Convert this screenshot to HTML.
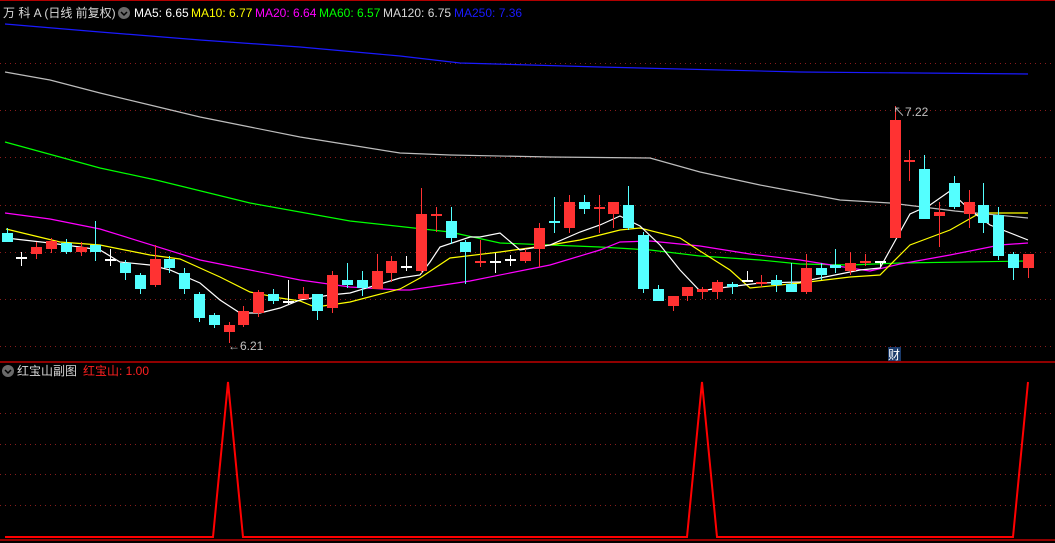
<!DOCTYPE html>
<html><head><meta charset="utf-8"><style>
html,body{margin:0;padding:0;background:#000;width:1055px;height:543px;overflow:hidden}
svg{display:block}
text{font-family:"Liberation Sans","Noto Sans CJK SC",sans-serif;font-size:12px}
</style></head><body>
<svg id="s" width="1055" height="543" xmlns="http://www.w3.org/2000/svg">
<rect width="1055" height="543" fill="#000"/>
<line x1="0" y1="0.5" x2="1055" y2="0.5" stroke="#b00000"/>
<g stroke="#8a1c1c" stroke-dasharray="1,4" stroke-width="1">
<line x1="0" y1="63.5" x2="1055" y2="63.5"/><line x1="0" y1="110.5" x2="1055" y2="110.5"/>
<line x1="0" y1="157.5" x2="1055" y2="157.5"/><line x1="0" y1="205.5" x2="1055" y2="205.5"/>
<line x1="0" y1="252.5" x2="1055" y2="252.5"/><line x1="0" y1="299.5" x2="1055" y2="299.5"/>
<line x1="0" y1="346.5" x2="1055" y2="346.5"/>
<line x1="0" y1="413.5" x2="1055" y2="413.5"/><line x1="0" y1="444.5" x2="1055" y2="444.5"/>
<line x1="0" y1="474.5" x2="1055" y2="474.5"/><line x1="0" y1="505.5" x2="1055" y2="505.5"/>
</g>
<line x1="0" y1="362" x2="1055" y2="362" stroke="#c00000" stroke-width="1.5"/>
<line x1="0" y1="540" x2="1055" y2="540" stroke="#c00000" stroke-width="1.5"/>
<g fill="none" stroke-width="1.2">
<polyline stroke="#1a1aff" points="5,24 100,32 200,40 300,47 400,56 460,63 600,67 800,72 1028,74"/>
<polyline stroke="#bdbdbd" points="5,72 50,80 100,93 150,105 200,117 250,127 300,137 350,145 400,153 450,155 550,157 650,158 700,172 760,185 840,200 890,203 955,211 1028,218"/>
<polyline stroke="#00ff00" points="5,142 100,168 156,180 250,203 350,221 450,232 500,243 550,245 600,247 650,250 700,256 760,260 800,264 850,265 900,263 1028,261"/>
<polyline stroke="#ff00ff" points="5,213 50,219 100,229 200,260 300,280 350,287 400,290 410,290 470,281 550,265 600,250 620,242 650,241 700,246 750,254 800,260 850,268 870,271 900,264 950,255 1000,245 1028,243"/>
<polyline stroke="#ffff00" points="6,229 60,242 100,245 150,255 180,259 200,268 220,277 250,292 280,298 300,301 315,307 330,305 350,302 400,289 420,278 450,258 500,252 550,245 580,240 620,230 640,228 680,238 700,251 730,270 750,288 800,283 850,277 880,275 910,245 950,230 980,213 1000,213 1028,213"/>
<polyline stroke="#ffffff" points="6,238 50,243 80,247 100,250 120,262 150,265 170,270 200,283 220,300 240,313 260,313 280,308 300,300 330,295 350,293 400,278 420,275 430,262 440,247 470,237 480,237 500,233 520,250 550,245 580,232 600,225 620,216 640,226 660,245 680,270 700,291 720,288 760,283 800,282 830,276 860,270 880,268 910,214 930,205 950,191 970,210 990,225 1028,240"/>
</g>
<g id="c"></g>
<polyline fill="none" stroke="#ff0000" stroke-width="2" points="5,537 213,537 228,382 243,537 687,537 702,382 717,537 1013,537 1028,382"/>
<text x="3" y="17" fill="#d8d8d8">万 科 A (日线 前复权)</text>
<circle cx="124" cy="13" r="6" fill="#6a6a6a"/><path d="M121 12l3 3 3-3" stroke="#000" fill="none" stroke-width="1.5"/>
<text x="134" y="17" fill="#fff">MA5: 6.65</text>
<text x="191" y="17" fill="#ffff00">MA10: 6.77</text>
<text x="255" y="17" fill="#ff00ff">MA20: 6.64</text>
<text x="319" y="17" fill="#00ff00">MA60: 6.57</text>
<text x="383" y="17" fill="#d8d8d8">MA120: 6.75</text>
<text x="454" y="17" fill="#1a1aff">MA250: 7.36</text>
<circle cx="8" cy="371" r="6" fill="#6a6a6a"/><path d="M5 370l3 3 3-3" stroke="#000" fill="none" stroke-width="1.5"/>
<text x="17" y="375" fill="#d8d8d8">红宝山副图</text>
<text x="83" y="375" fill="#ff2020">红宝山: 1.00</text>
<text x="228" y="350" fill="#c0c0c0">←6.21</text>
<text x="893" y="116" fill="#c0c0c0">↖7.22</text>
<rect x="888" y="347" width="13" height="14" fill="#1a3a6a"/>
<text x="888" y="359" fill="#fff">财</text>
</svg>
<script>
var d=[[233,242,228,242,'c'],[257,257,252,266,'w'],[247,254,242,259,'r'],[241,249,238,253,'r'],[243,252,239,254,'c'],[247,252,242,256,'r'],[245,252,221,261,'c'],[259,259,249,266,'w'],[263,273,260,280,'c'],[275,289,273,294,'c'],[259,285,245,287,'r'],[259,268,256,273,'c'],[273,289,268,294,'c'],[294,318,292,322,'c'],[315,325,313,328,'c'],[325,332,322,343,'r'],[311,325,306,327,'r'],[292,313,290,317,'r'],[294,301,289,304,'c'],[301,302,280,304,'w'],[294,299,287,299,'r'],[294,311,294,320,'c'],[275,308,271,313,'r'],[280,285,263,288,'c'],[280,288,271,296,'c'],[271,289,254,289,'r'],[261,273,256,282,'r'],[266,266,256,271,'w'],[214,271,188,273,'r'],[214,216,207,232,'r'],[221,238,207,244,'c'],[242,252,240,284,'c'],[261,263,240,267,'r'],[261,261,253,273,'w'],[259,259,255,266,'w'],[252,261,249,263,'r'],[228,249,223,267,'r'],[221,223,197,233,'c'],[202,228,195,233,'r'],[202,209,195,214,'c'],[207,209,195,233,'r'],[202,214,202,228,'r'],[205,228,186,230,'c'],[235,289,232,293,'c'],[289,301,285,301,'c'],[296,306,296,311,'r'],[287,296,287,301,'r'],[289,292,287,299,'r'],[282,292,280,299,'r'],[284,287,282,294,'c'],[280,280,271,282,'w'],[282,284,275,287,'r'],[280,285,275,292,'c'],[284,292,263,292,'c'],[268,292,254,294,'r'],[268,275,263,280,'c'],[265,268,249,273,'c'],[263,271,252,275,'r'],[261,263,254,266,'r'],[261,261,261,267,'w'],[120,238,106,238,'r'],[160,162,150,181,'r'],[169,219,155,219,'c'],[212,216,202,247,'r'],[183,207,176,209,'c'],[202,214,190,228,'r'],[205,223,183,233,'c'],[215,256,207,260,'c'],[254,268,252,280,'c'],[254,268,268,278,'r']];
var g=document.getElementById('c'),h='';
var col={c:'#54ffff',r:'#ff3232',w:'#ffffff'};
d.forEach(function(a,i){var x=Math.round(6.5+i*14.8);var c=col[a[4]];
h+='<line x1="'+(x+.5)+'" y1="'+a[2]+'" x2="'+(x+.5)+'" y2="'+a[3]+'" stroke="'+c+'"/>';
var hh=Math.max(a[1]-a[0],2);
h+='<rect x="'+(x-5)+'" y="'+a[0]+'" width="11" height="'+hh+'" fill="'+c+'"/>';});
g.innerHTML=h;
</script>
</body></html>
